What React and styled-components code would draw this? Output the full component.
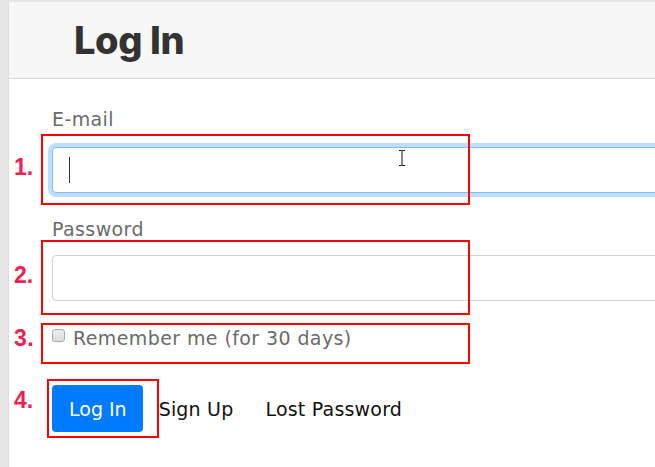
import styled, { createGlobalStyle } from "styled-components";

const GlobalStyle = createGlobalStyle`
  html, body {
    margin: 0;
    padding: 0;
    background: #e6e6e6;
    overflow: hidden;
  }
  body {
    font-family: "DejaVu Sans", "Noto Sans", sans-serif;
  }
`;

const Page = styled.div`
  padding: 2px 0 0 8px;
  width: 647px;
  height: 465px;
  overflow: hidden;
`;

const Card = styled.div`
  width: 760px;
  height: 470px;
  background: #ffffff;
  border-left: 1px solid #dedede;
`;

const Header = styled.div`
  height: 76px;
  background: #f7f7f7;
  border-bottom: 1px solid #d9d9d9;
  display: flex;
  align-items: center;
  padding-left: 65px;
`;

const Title = styled.h1`
  margin: 0;
  font-family: Inter, "DejaVu Sans", sans-serif;
  font-weight: 800;
  font-size: 38px;
  letter-spacing: -0.4px;
  color: #333333;
`;

const Body = styled.div`
  padding: 27px 0 0 43px;
  display: flex;
  flex-direction: column;
`;

const Field = styled.div`
  display: flex;
  flex-direction: column;
  margin-bottom: ${(p) => p.$gap || 0}px;
`;

const Label = styled.label`
  font-size: 19px;
  line-height: 27px;
  letter-spacing: 0.4px;
  color: #6b6b6b;
  margin-bottom: ${(p) => p.$gap || 14}px;
`;

const InputWrap = styled.div`
  position: relative;
`;

const Input = styled.input`
  box-sizing: border-box;
  width: 660px;
  height: 46px;
  border: 1px solid ${(p) => (p.$focus ? "#80bdff" : "#ced4da")};
  border-radius: 4px;
  box-shadow: ${(p) => (p.$focus ? "0 0 0 4px #bfdeff" : "none")};
  outline: none;
  padding: 0 16px;
  font-size: 18px;
  font-family: inherit;
  background: #fff;
  caret-color: transparent;
`;

const Caret = styled.span`
  position: absolute;
  left: 17px;
  top: 10px;
  width: 1px;
  height: 26px;
  background: #333;
`;

const Pointer = styled.svg`
  position: absolute;
  left: 345px;
  top: 2px;
`;

const Mark = styled.div`
  position: absolute;
  left: ${(p) => p.$l}px;
  top: ${(p) => p.$t}px;
  width: ${(p) => p.$w}px;
  height: ${(p) => p.$h}px;
  border: 2px solid #ff0000;
  box-sizing: border-box;
  pointer-events: none;
`;

const Num = styled.span`
  position: absolute;
  left: ${(p) => p.$l}px;
  top: ${(p) => p.$t}px;
  font-family: "Liberation Sans", Arial, sans-serif;
  font-weight: 700;
  font-size: 23px;
  line-height: 26px;
  color: #f01e52;
`;

const CheckRow = styled.label`
  position: relative;
  display: flex;
  align-items: center;
  height: 27px;
  margin-top: 1px;
  font-size: 19px;
  letter-spacing: 0.4px;
  color: #6b6b6b;
  margin-bottom: 34px;
`;

const Check = styled.input`
  appearance: none;
  box-sizing: border-box;
  width: 13px;
  height: 13px;
  margin: 0 8px 0 0;
  position: relative;
  top: -2px;
  border: 1px solid #a9a9a9;
  border-radius: 3px;
  background: linear-gradient(#eeeeee, #dcdcdc);
`;

const Actions = styled.div`
  display: flex;
  align-items: center;
`;

const BtnWrap = styled.div`
  position: relative;
`;

const Primary = styled.button`
  height: 47px;
  padding: 0 16px 0 17px;
  border: none;
  border-radius: 4px;
  background: #007bff;
  color: #fff;
  font-family: inherit;
  font-size: 19px;
`;

const LinkBtn = styled.a`
  padding: 0 16px;
  font-size: 19px;
  letter-spacing: 0.2px;
  color: #111;
  text-decoration: none;
`;

export default function App() {
  return (
    <>
      <GlobalStyle />
      <Page>
        <Card>
          <Header>
            <Title>Log In</Title>
          </Header>
          <Body>
            <Field $gap={23}>
              <Label>E-mail</Label>
              <InputWrap>
                <Input $focus type="text" />
                <Caret />
                <Pointer width="10" height="18" viewBox="0 0 10 18">
                  <path
                    d="M2 1.5h2.5l0.5 0.5 0.5-0.5H8M5 2v14M2 16.5h2.5l0.5-0.5 0.5 0.5H8"
                    stroke="#111"
                    strokeWidth="1"
                    fill="none"
                  />
                </Pointer>
                <Mark $l={-11} $t={-13} $w={429} $h={71} />
                <Num $l={-38} $t={7}>1.</Num>
              </InputWrap>
            </Field>
            <Field $gap={22}>
              <Label $gap={12}>Password</Label>
              <InputWrap>
                <Input type="password" />
                <Mark $l={-11} $t={-15} $w={429} $h={75} />
                <Num $l={-38} $t={7}>2.</Num>
              </InputWrap>
            </Field>
            <CheckRow>
              <Check type="checkbox" />
              Remember me (for 30 days)
              <Mark $l={-11} $t={-1} $w={429} $h={41} />
              <Num $l={-38} $t={1}>3.</Num>
            </CheckRow>
            <Actions>
              <BtnWrap>
                <Primary>Log In</Primary>
                <Mark $l={-5} $t={-6} $w={112} $h={59} />
                <Num $l={-38} $t={2}>4.</Num>
              </BtnWrap>
              <LinkBtn>Sign Up</LinkBtn>
              <LinkBtn>Lost Password</LinkBtn>
            </Actions>
          </Body>
        </Card>
      </Page>
    </>
  );
}
